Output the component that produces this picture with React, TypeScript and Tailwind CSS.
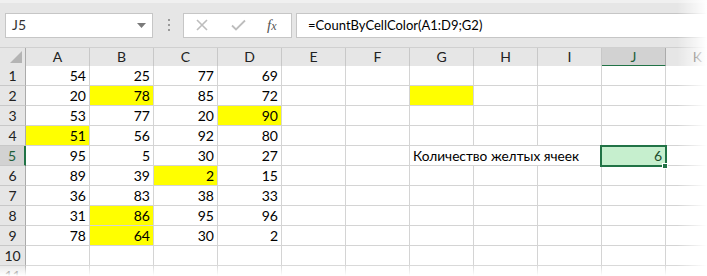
import React from 'react'

const cols = ['A', 'B', 'C', 'D', 'E', 'F', 'G', 'H', 'I', 'J', 'K']

const data: (number | null)[][] = [
  [54, 25, 77, 69],
  [20, 78, 85, 72],
  [53, 77, 20, 90],
  [51, 56, 92, 80],
  [95, 5, 30, 27],
  [89, 39, 2, 15],
  [36, 83, 38, 33],
  [31, 86, 95, 96],
  [78, 64, 30, 2],
  [],
  [],
]

// yellow cells as "row-col" (1-based row, 0-based col)
const yellow = new Set(['4-0', '2-1', '8-1', '9-1', '6-2', '3-3', '2-6'])

function Toolbar() {
  return (
    <div className="flex h-[47px] items-center bg-[#e6e6e6] border-t-[3px] border-[#f0f0f0]">
      <div className="ml-[5px] flex h-[25px] w-[148px] items-center justify-between border border-[#c6c6c6] bg-white pl-[6px] pr-[6px]">
        <span className="text-[14px] text-[#333]">J5</span>
        <svg width="9" height="5" viewBox="0 0 9 5">
          <path d="M0 0h9L4.5 5z" fill="#7a7a7a" />
        </svg>
      </div>
      <div className="ml-[15px] flex w-[4px] flex-col gap-[3px]">
        <span className="block h-[2px] w-[2px] bg-[#9a9a9a]" />
        <span className="block h-[2px] w-[2px] bg-[#9a9a9a]" />
        <span className="block h-[2px] w-[2px] bg-[#9a9a9a]" />
      </div>
      <div className="ml-[11px] flex h-[25px] w-[109px] items-center border border-[#c6c6c6] bg-white">
        <svg className="ml-[12px]" width="12" height="12" viewBox="0 0 12 12">
          <path d="M1 1l10 10M11 1L1 11" stroke="#bdbdbd" strokeWidth="1.6" />
        </svg>
        <svg className="ml-[23px]" width="15" height="12" viewBox="0 0 15 12">
          <path d="M1 6.5l4 4L14 1.5" stroke="#bdbdbd" strokeWidth="1.8" fill="none" />
        </svg>
        <span className="ml-[21px] font-['Liberation_Serif',serif] text-[15px] italic text-[#555]">
          f<span className="text-[12px]">x</span>
        </span>
      </div>
      <div className="ml-[4px] flex h-[25px] flex-1 items-center border border-r-0 border-[#c6c6c6] bg-white pl-[11px]">
        <span className="text-[13px] text-black">=CountByCellColor(A1:D9;G2)</span>
      </div>
    </div>
  )
}

function Header() {
  return (
    <div className="grid h-[19px] grid-cols-[26px_repeat(11,64px)] border-t border-[#d0d0d0] bg-[#e6e6e6]">
      <div className="flex items-end justify-end border-r border-b border-[#ababab] p-[3px]">
        <svg width="12" height="12" viewBox="0 0 12 12">
          <path d="M12 0v12H0z" fill="#b4b4b4" />
        </svg>
      </div>
      {cols.map((c) =>
        c === 'J' ? (
          <div
            key={c}
            className="flex items-center justify-center border-r border-b-2 border-r-[#ababab] border-b-[#217346] bg-[#d2d2d2] text-[14px] text-[#1e5e3a]"
          >
            {c}
          </div>
        ) : (
          <div
            key={c}
            className="flex items-center justify-center border-r border-b border-r-[#c8c8c8] border-b-[#ababab] text-[14px] text-[#222]"
          >
            {c}
          </div>
        )
      )}
    </div>
  )
}

function Row({ n, values }: { n: number; values: (number | null)[] }) {
  const active = n === 5
  return (
    <div className="grid h-[20px] grid-cols-[26px_repeat(11,64px)]">
      <div
        className={
          active
            ? 'flex items-center justify-center border-r-2 border-b border-r-[#217346] border-b-[#c8c8c8] bg-[#d2d2d2] text-[14px] text-[#1e5e3a]'
            : 'flex items-center justify-center border-r border-b border-r-[#ababab] border-b-[#c8c8c8] bg-[#e6e6e6] text-[14px] text-[#222]'
        }
      >
        {n}
      </div>
      {cols.map((c, i) => {
        const v = values[i]
        const isYellow = yellow.has(`${n}-${i}`)
        let bg = 'bg-white'
        if (isYellow) bg = 'bg-[#ffff00]'
        if (n === 5 && c === 'J') bg = 'bg-[#c6efce]'
        let content: React.ReactNode = v ?? ''
        if (n === 5 && c === 'G') {
          // text spills over H5 and I5, hiding their gridlines
          content = (
            <span className="absolute left-0 top-0 z-10 flex h-[19px] w-[191px] items-center whitespace-nowrap bg-white pl-[3px] text-[13.7px]">
              Количество желтых ячеек
            </span>
          )
        }
        if (n === 5 && c === 'J') content = <span className="text-[#1d4d2c]">6</span>
        return (
          <div
            key={c}
            className={`relative flex items-center justify-end border-r border-b border-[#d4d4d4] pr-[3px] text-[14px] text-black ${bg}`}
          >
            {content}
          </div>
        )
      })}
    </div>
  )
}

export default function App() {
  return (
    <div className="relative h-[276px] w-[707px] overflow-hidden bg-white font-['Lato','Liberation_Sans',sans-serif] leading-none">
      <Toolbar />
      <Header />
      {data.map((r, i) => (
        <Row key={i} n={i + 1} values={r} />
      ))}

      {/* selection on J5 */}
      <div className="absolute left-[600px] top-[145px] z-20 h-[22px] w-[67px] border-2 border-[#217346]" />
      <div className="absolute left-[662px] top-[163px] z-20 h-[6px] w-[6px] border border-white bg-[#217346]" />

      {/* screenshot fade at edges */}
      <div className="pointer-events-none absolute right-0 top-0 z-30 h-full w-[30px] bg-gradient-to-r from-transparent to-white" />
      <div className="pointer-events-none absolute bottom-0 left-0 z-30 h-[12px] w-full bg-gradient-to-b from-transparent to-white" />
    </div>
  )
}
